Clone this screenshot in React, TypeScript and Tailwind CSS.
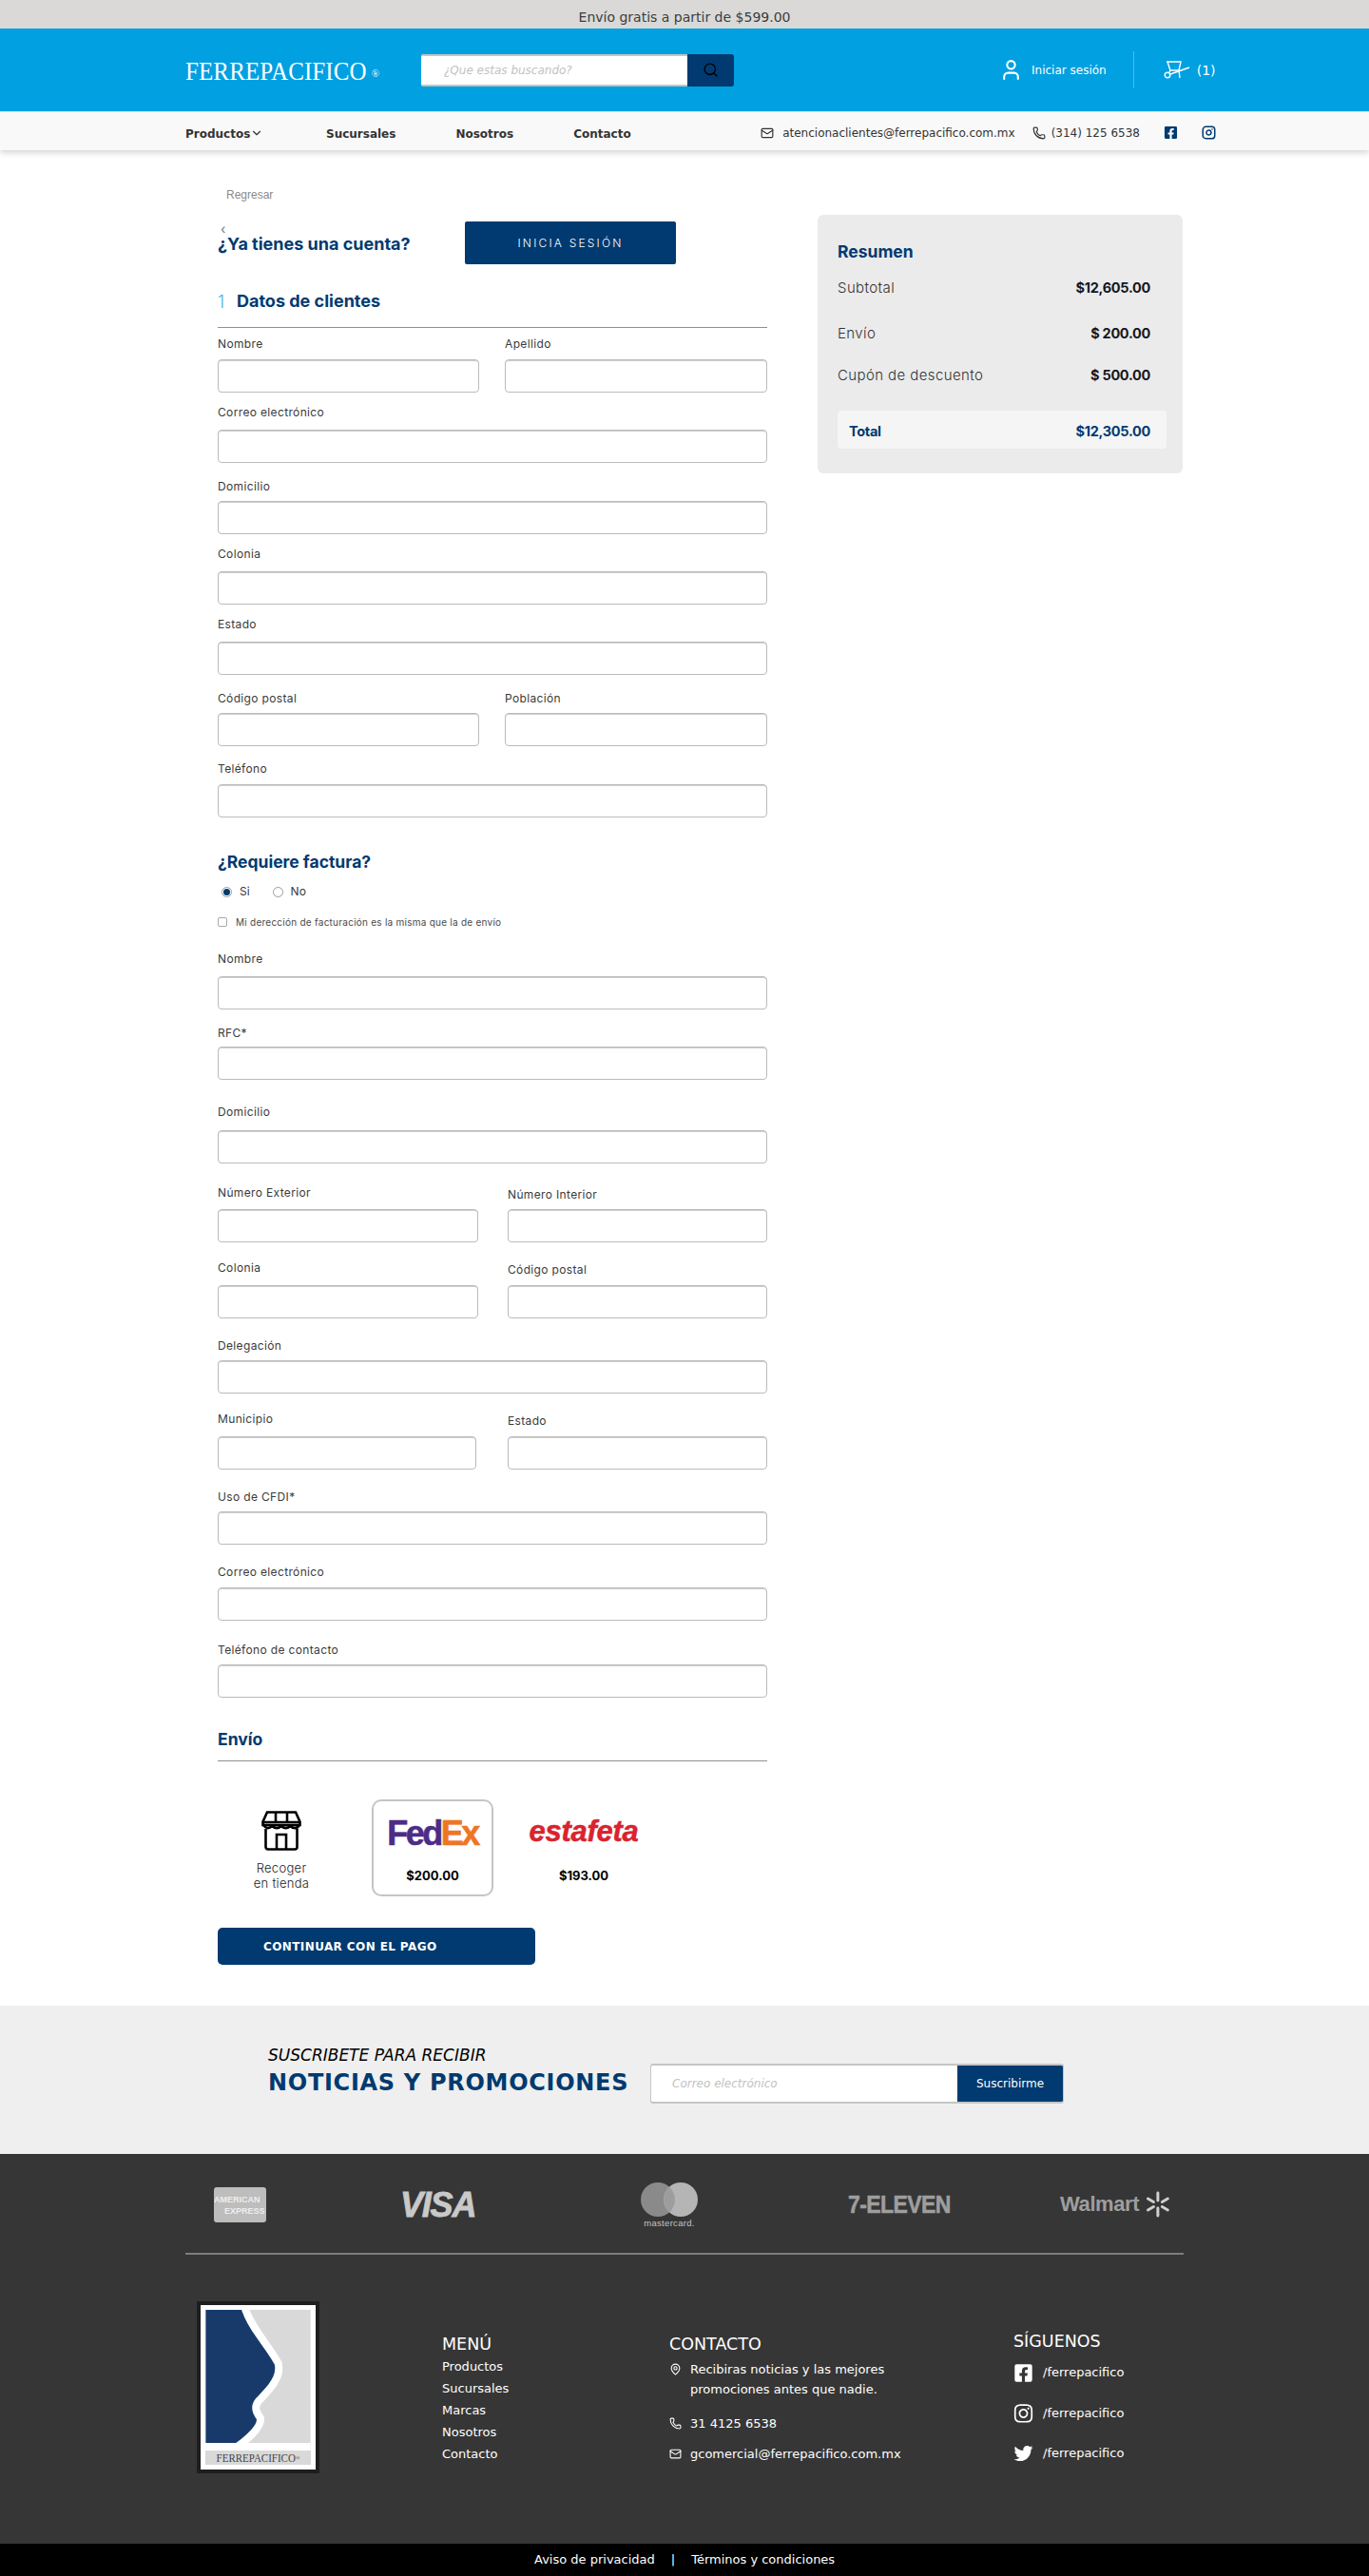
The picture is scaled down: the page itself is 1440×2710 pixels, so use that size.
import { ChevronDown, Instagram, Mail, MapPin, Phone, Search, User } from "lucide-react";
import { FaFacebookSquare, FaInstagram, FaTwitter } from "react-icons/fa";

const sans = "font-['Inter','Liberation_Sans',sans-serif]";

function Field({
  label,
  className = "",
  gap = "mb-[8px]",
}: {
  label: string;
  className?: string;
  gap?: string;
}) {
  return (
    <div className={className}>
      <label className={`block h-4 text-[12px] leading-4 tracking-[0.35px] text-[#3a3a3a] ${gap}`}>{label}</label>
      <input className="block h-[35px] w-full rounded-[4px] border border-[#bbbbbb] bg-white shadow-[inset_0_1px_0_#cfcfcf] outline-none" />
    </div>
  );
}

function Wheelbarrow() {
  return (
    <svg viewBox="0 0 28 19" className="h-[19px] w-[28px]" fill="none" stroke="white" strokeWidth="1.4" aria-hidden>
      <path d="M3 1h15l-2 9H7L4 1" />
      <path d="M7 14l20-7M7 10l-1 2M16 10l1 8" />
      <circle cx="4" cy="15" r="2.8" />
    </svg>
  );
}

function StoreIcon() {
  return (
    <svg viewBox="0 0 42 42" className="h-[42px] w-[42px]" fill="none" stroke="black" strokeWidth="2.6" aria-hidden>
      <path d="M6 1.500h30l4.500 10v3.500h-39v-3.500z" />
      <path d="M2 12h38M15 2v10M27 2v10" />
      <path d="M2 15c3 4 6 4 9.500 1 3 3 6 3 9.500 0 3 3 6 3 9.500 0 3 3 7 3 9.500-1" />
      <path d="M4.500 19v19a2.500 2.500 0 0 0 2.500 2.500h28a2.500 2.500 0 0 0 2.500-2.500v-19" />
      <path d="M16 40V25h10v15" />
    </svg>
  );
}

function LogoMark() {
  const shape = "M0 0H38C44 20 62 38 73 58C76 72 62 84 53 94C46 103 50 110 54 116C54 124 40 135 32 141H0Z";
  return (
    <div className="w-[129px] bg-[#1e1e1e] p-[4px]">
      <div className="bg-white p-[5px]">
        <svg viewBox="0 0 111 149" className="block h-[148px] w-[111px]" aria-hidden>
          <rect width="111" height="149" fill="#d9d9d9" />
          <path d={shape} fill="white" stroke="white" strokeWidth="16" />
          <rect x="-2" y="141" width="113" height="8" fill="white" />
          <path d={shape} fill="#183a6b" />
        </svg>
        <div className="flex h-[15px] items-center justify-center whitespace-nowrap bg-[#d9d9d9] font-['Liberation_Serif',serif] text-[11px] leading-none text-[#444]">
          <span className="inline-block scale-y-[1.2]">FERREPACIFICO</span>
          <span className="text-[6px]">®</span>
        </div>
      </div>
    </div>
  );
}

function Header() {
  return (
    <header className="relative shadow-[0_3px_6px_rgba(0,0,0,0.16)]">
      <div className="flex h-[30px] items-center justify-center bg-[#dad9d7] pt-[6px] text-[14px] text-[#3c3c3c]">
        Envío gratis a partir de $599.00
      </div>
      <div className="flex h-[87px] items-center bg-[#00a0e1] pl-[195px]">
        <div className="flex w-[248px] items-center pt-[2px] font-['Liberation_Serif',serif] text-[25px] tracking-[0.1px] text-white">
          <span className="inline-block scale-y-[1.12]">FERREPACIFICO</span>
          <span className="ml-[5px] mt-[6px] text-[11px]">®</span>
        </div>
        <div className="flex h-[34px] w-[329px] overflow-hidden rounded-[3px]">
          <input
            placeholder="¿Que estas buscando?"
            className="min-w-0 flex-1 border-y-2 border-[#c4c4c4] bg-white pl-6 text-[12px] italic outline-none placeholder:text-[#c2c2c2]"
          />
          <button className="flex w-[49px] items-center justify-center bg-[#003a70]">
            <Search className="h-[17px] w-[17px] text-black" />
          </button>
        </div>
        <User className="ml-[279px] h-[25px] w-[25px] text-white" strokeWidth={2} />
        <span className="ml-[9px] text-[12px] text-white">Iniciar sesión</span>
        <div className="ml-[28px] h-[39px] w-[1px] bg-[#4fbbe9]" />
        <div className="ml-[31px]">
          <Wheelbarrow />
        </div>
        <span className="ml-[7px] mt-[2px] text-[14px] text-white">(1)</span>
      </div>
      <div className="flex h-[41px] items-center justify-between border-t border-[#cfe6f2] bg-[#f9f9f9] pl-[195px] pr-[161px] text-[#333]">
        <nav className="flex items-center gap-[63px] pt-[6px] text-[12px] font-bold">
          <a className="mr-[5px] flex w-[85px] items-center">
            Productos
            <ChevronDown className="mt-[-2px] h-[14px] w-[14px]" strokeWidth={2} />
          </a>
          <a className="ml-[-5px]">Sucursales</a>
          <a>Nosotros</a>
          <a>Contacto</a>
        </nav>
        <div className="flex items-center pt-[3px] text-[12px]">
          <Mail className="h-[14px] w-[14px]" />
          <span className="ml-[9px]">atencionaclientes@ferrepacifico.com.mx</span>
          <Phone className="ml-[18px] h-[14px] w-[14px]" />
          <span className="ml-[6px]">(314) 125 6538</span>
          <FaFacebookSquare className="ml-[25px] h-[15px] w-[15px] text-[#003a70]" />
          <Instagram className="ml-[25px] h-[15px] w-[15px] text-[#003a70]" strokeWidth={2.4} />
        </div>
      </div>
    </header>
  );
}

function Summary() {
  return (
    <aside className={`ml-[53px] mt-[68px] h-[272px] w-[384px] rounded-[6px] bg-[#ebebeb] pl-[21px] pr-[17px] pt-[27px] ${sans}`}>
      <h2 className="text-[17.5px] font-bold leading-6 text-[#003a70]">Resumen</h2>
      <div className="mt-[16px] flex h-5 items-center justify-between pr-[17px] text-[15px] tracking-[0.4px] text-[#333]">
        <span className="font-light">Subtotal</span>
        <b className="text-[14.5px] tracking-[-0.3px] text-[#14171f]">$12,605.00</b>
      </div>
      <div className="mt-[28px] flex h-5 items-center justify-between pr-[17px] text-[15px] tracking-[0.4px] text-[#333]">
        <span className="font-light">Envío</span>
        <b className="text-[14.5px] tracking-[-0.3px] text-[#14171f]">$ 200.00</b>
      </div>
      <div className="mt-[24px] flex h-5 items-center justify-between pr-[17px] text-[15px] tracking-[0.4px] text-[#333]">
        <span className="font-light">Cupón de descuento</span>
        <b className="text-[14.5px] tracking-[-0.3px] text-[#14171f]">$ 500.00</b>
      </div>
      <div className="mt-[27px] flex h-[40px] items-center justify-between rounded-[4px] bg-[#f5f5f5] pl-3 pr-[17px] pt-[4px] text-[14.5px] font-bold tracking-[-0.3px] text-[#003a70]">
        <span>Total</span>
        <span>$12,305.00</span>
      </div>
    </aside>
  );
}

function ShippingOptions() {
  return (
    <div className="mt-[40px] flex h-[102px] items-start">
      <div className="ml-[22px] flex w-[90px] flex-col items-center pt-[12px] text-center text-[13px] font-light leading-4 tracking-[0.3px] text-[#222]">
        <StoreIcon />
        <span className="mt-[10px]">Recoger</span>
        <span>en tienda</span>
      </div>
      <div className="ml-[50px] flex h-[102px] w-[128px] flex-col items-center rounded-[10px] border-2 border-[#c5c5c5] pt-[17px]">
        <div className="font-['Liberation_Sans',sans-serif] text-[36px] font-bold leading-[34px] tracking-[-2.5px] [-webkit-text-stroke:0.6px]">
          <span className="text-[#4d2c86]">Fed</span>
          <span className="text-[#ee7623]">Ex</span>
        </div>
        <b className="mt-[18px] text-[13px] text-black">$200.00</b>
      </div>
      <div className="ml-[36px] flex w-[118px] flex-col items-center pt-[17px]">
        <div className="font-['Liberation_Sans',sans-serif] text-[31px] font-bold italic leading-[34px] tracking-[-0.3px] text-[#d9232e] [-webkit-text-stroke:0.5px]">
          estafeta
        </div>
        <b className="mt-[20px] text-[13px] text-black">$193.00</b>
      </div>
    </div>
  );
}

function CheckoutForm() {
  return (
    <div className={`w-[578px] ${sans}`}>
      <a className="ml-[9px] mt-[39px] block h-4 font-['Liberation_Sans',sans-serif] text-[12px] leading-4 text-[#8a8a8a]">Regresar</a>
      <div className="mt-[20px] flex h-[45px] items-start">
        <div className="w-[260px] pt-[3px]">
          <div className="ml-[3px] h-[9px] text-[14px] leading-[9px] text-[#777]">‹</div>
          <h2 className="text-[18px] font-bold leading-6 text-[#003a70]">¿Ya tienes una cuenta?</h2>
        </div>
        <button className="h-[45px] w-[222px] rounded-[2px] bg-[#003a70] text-[12px] font-light tracking-[2.2px] text-white">
          INICIA SESIÓN
        </button>
      </div>
      <div className="mt-[27px] flex h-6 items-center font-bold text-[#003a70]">
        <span className="w-[20px] text-[18px] font-light text-[#47b5e6]">1</span>
        <h2 className="text-[18px] leading-6">Datos de clientes</h2>
      </div>
      <div className="mt-[15px] h-[1px] bg-[#8f8f8f]" />

      <div className="mt-[9px] grid grid-cols-[275px_276px] gap-x-[27px]">
        <Field label="Nombre" gap="mb-[8px]" />
        <Field label="Apellido" gap="mb-[8px]" />
      </div>
      <Field label="Correo electrónico" className="mt-[13px]" gap="mb-[10px]" />
      <Field label="Domicilio" className="mt-[17px]" gap="mb-[7px]" />
      <Field label="Colonia" className="mt-[13px]" gap="mb-[10px]" />
      <Field label="Estado" className="mt-[13px]" gap="mb-[10px]" />
      <div className="mt-[17px] grid grid-cols-[275px_276px] gap-x-[27px]">
        <Field label="Código postal" gap="mb-[7px]" />
        <Field label="Población" gap="mb-[7px]" />
      </div>
      <Field label="Teléfono" className="mt-[16px]" gap="mb-[8px]" />

      <h2 className="mt-[35px] text-[17.5px] font-bold leading-6 text-[#003a70]">¿Requiere factura?</h2>
      <div className="mt-[11px] flex h-4 items-center pl-[4px] text-[12px] text-[#3a3a3a]">
        <span className="flex h-[11px] w-[11px] items-center justify-center rounded-full border border-[#9a9a9a]">
          <span className="h-[7px] w-[7px] rounded-full bg-[#003a70]" />
        </span>
        <span className="ml-[8px]">Si</span>
        <span className="ml-[24px] h-[11px] w-[11px] rounded-full border border-[#9a9a9a]" />
        <span className="ml-[8px]">No</span>
      </div>
      <div className="mt-[16px] flex h-4 items-center text-[10px] tracking-[0.25px] text-[#4a4a4a]">
        <span className="h-[10px] w-[10px] rounded-[2px] border border-[#a8a8a8]" />
        <span className="ml-[9px]">Mi derección de facturación es la misma que la de envío</span>
      </div>

      <Field label="Nombre" className="mt-[23px]" gap="mb-[10px]" />
      <Field label="RFC*" className="mt-[17px]" gap="mb-[6px]" />
      <Field label="Domicilio" className="mt-[26px]" gap="mb-[11px]" />
      <div className="mt-[23px] grid grid-cols-[274px_273px] items-end gap-x-[31px]">
        <Field label="Número Exterior" gap="mb-[9px]" />
        <Field label="Número Interior" gap="mb-[7px]" />
      </div>
      <div className="mt-[19px] grid grid-cols-[274px_273px] items-end gap-x-[31px]">
        <Field label="Colonia" gap="mb-[10px]" />
        <Field label="Código postal" gap="mb-[8px]" />
      </div>
      <Field label="Delegación" className="mt-[21px]" gap="mb-[7px]" />
      <div className="mt-[19px] grid grid-cols-[272px_273px] items-end gap-x-[33px]">
        <Field label="Municipio" gap="mb-[10px]" />
        <Field label="Estado" gap="mb-[8px]" />
      </div>
      <Field label="Uso de CFDI*" className="mt-[21px]" gap="mb-[7px]" />
      <Field label="Correo electrónico" className="mt-[21px]" gap="mb-[8px]" />
      <Field label="Teléfono de contacto" className="mt-[23px]" gap="mb-[7px]" />

      <h2 className="mt-[32px] text-[17.5px] font-bold leading-6 text-[#003a70]">Envío</h2>
      <div className="mt-[10px] h-[1px] bg-[#8f8f8f]" />
      <ShippingOptions />
      <button className="mb-[43px] mt-[33px] block h-[39px] w-[334px] rounded-[5px] bg-[#003a70] pl-[48px] text-left font-['DejaVu_Sans',sans-serif] text-[12px] font-bold tracking-[0.4px] text-white">
        CONTINUAR CON EL PAGO
      </button>
    </div>
  );
}

function Subscribe() {
  return (
    <section className="flex h-[156px] items-center bg-[#efefef] pl-[282px]">
      <div className="mt-[-18px] w-[402px]">
        <p className="text-[17px] italic leading-5 text-black">SUSCRIBETE PARA RECIBIR</p>
        <p className="mt-[3px] text-[24px] font-bold leading-8 tracking-[0.7px] text-[#003a70]">NOTICIAS Y PROMOCIONES</p>
      </div>
      <div className="mt-[7px] flex h-[42px] w-[435px] overflow-hidden rounded-[3px] border border-y-2 border-[#c4c4c4] bg-white">
        <input
          placeholder="Correo electrónico"
          className="min-w-0 flex-1 pl-[22px] text-[12px] italic outline-none placeholder:text-[#c2c2c2]"
        />
        <button className="w-[111px] bg-[#003a70] text-[12px] text-white">Suscribirme</button>
      </div>
    </section>
  );
}

function Brands() {
  return (
    <div className="flex h-[48px] items-start pl-[225px] font-['Liberation_Sans',sans-serif]">
      <div className="mt-[5px] flex h-[37px] w-[55px] flex-col justify-center overflow-hidden rounded-[3px] bg-[#bdbdbd] text-[9px] font-bold leading-[12px] text-[#eee]">
        <span className="whitespace-nowrap">AMERICAN</span>
        <span className="whitespace-nowrap pl-[11px]">EXPRESS</span>
      </div>
      <div className="ml-[141px] mt-[9px] w-[80px] text-[36px] font-bold italic leading-[30px] tracking-[-1.2px] text-[#c9c9c9] [-webkit-text-stroke:0.8px]">
        VISA
      </div>
      <div className="ml-[173px] flex w-[60px] flex-col items-center">
        <svg viewBox="0 0 60 36" className="h-[36px] w-[60px]" aria-hidden>
          <circle cx="18" cy="18" r="18" fill="#8a8a8a" />
          <circle cx="42" cy="18" r="18" fill="#b5b5b5" />
          <path d="M30 4.600a18 18 0 0 1 0 26.800a18 18 0 0 1 0-26.800z" fill="#9d9d9d" />
        </svg>
        <span className="mt-[1px] whitespace-nowrap text-[9.5px] leading-[11px] tracking-[0.3px] text-[#c4c4c4]">mastercard.</span>
      </div>
      <div className="ml-[158px] mt-[11px] flex w-[109px] scale-y-[1.1] whitespace-nowrap text-[23px] font-bold leading-[24px] tracking-[-0.6px] text-[#9e9e9e] [-webkit-text-stroke:0.5px]">
        7-ELEVEN
      </div>
      <div className="ml-[114px] mt-[9px] flex w-[117px] items-center">
        <span className="text-[22px] font-bold leading-[28px] tracking-[-0.4px] text-[#9e9e9e]">Walmart</span>
        <svg viewBox="0 0 28 28" className="ml-[6px] h-[28px] w-[28px]" stroke="#d0d0d0" strokeWidth="3" strokeLinecap="round" aria-hidden>
          <path d="M14 2v8M14 18v8M3.500 8l6 3.500M18.500 16.500l6 3.500M3.500 20l6-3.500M18.500 11.500l6-3.500" />
        </svg>
      </div>
    </div>
  );
}

function Footer() {
  return (
    <footer className="text-white">
      <div className="h-[410px] bg-[#363636] pt-[30px]">
        <Brands />
        <div className="ml-[195px] mt-[26px] h-[2px] w-[1050px] bg-[#7d7d7d]" />
        <div className="mt-[49px] flex items-start pl-[207px] text-[13px]">
          <div className="w-[258px]">
            <LogoMark />
          </div>
          <div className="w-[239px] pt-[33px]">
            <h3 className="text-[17.5px] leading-6">MENÚ</h3>
            <ul className="leading-[23px]">
              <li>Productos</li>
              <li>Sucursales</li>
              <li>Marcas</li>
              <li>Nosotros</li>
              <li>Contacto</li>
            </ul>
          </div>
          <div className="w-[362px] pt-[33px]">
            <h3 className="text-[17.5px] leading-6">CONTACTO</h3>
            <div className="mt-[4px] flex leading-[21px]">
              <MapPin className="mt-[4px] h-[13px] w-[22px] shrink-0 pr-[9px]" />
              <p>
                Recibiras noticias y las mejores
                <br />
                promociones antes que nadie.
              </p>
            </div>
            <div className="mt-[15px] flex items-center leading-[21px]">
              <Phone className="h-[13px] w-[22px] shrink-0 pr-[9px]" />
              <span>31 4125 6538</span>
            </div>
            <div className="mt-[11px] flex items-center leading-[21px]">
              <Mail className="h-[13px] w-[22px] shrink-0 pr-[9px]" />
              <span>gcomercial@ferrepacifico.com.mx</span>
            </div>
          </div>
          <div className="pt-[30px]">
            <h3 className="text-[17.5px] leading-6">SÍGUENOS</h3>
            <div className="mt-[9px] flex h-6 items-center">
              <FaFacebookSquare className="h-[21px] w-[21px]" />
              <span className="ml-[10px]">/ferrepacifico</span>
            </div>
            <div className="mt-[19px] flex h-6 items-center">
              <FaInstagram className="h-[22px] w-[21px]" />
              <span className="ml-[10px]">/ferrepacifico</span>
            </div>
            <div className="mt-[18px] flex h-6 items-center">
              <FaTwitter className="h-[20px] w-[21px]" />
              <span className="ml-[10px]">/ferrepacifico</span>
            </div>
          </div>
        </div>
      </div>
      <div className="flex h-[34px] items-center bg-black pl-[562px] text-[13px]">
        <span>Aviso de privacidad</span>
        <span className="ml-[17px]">|</span>
        <span className="ml-[17px]">Términos y condiciones</span>
      </div>
    </footer>
  );
}

export default function App() {
  return (
    <div className="min-h-[2710px] bg-white font-['DejaVu_Sans',sans-serif]">
      <Header />
      <main className="flex items-start pl-[229px]">
        <CheckoutForm />
        <Summary />
      </main>
      <Subscribe />
      <Footer />
    </div>
  );
}
